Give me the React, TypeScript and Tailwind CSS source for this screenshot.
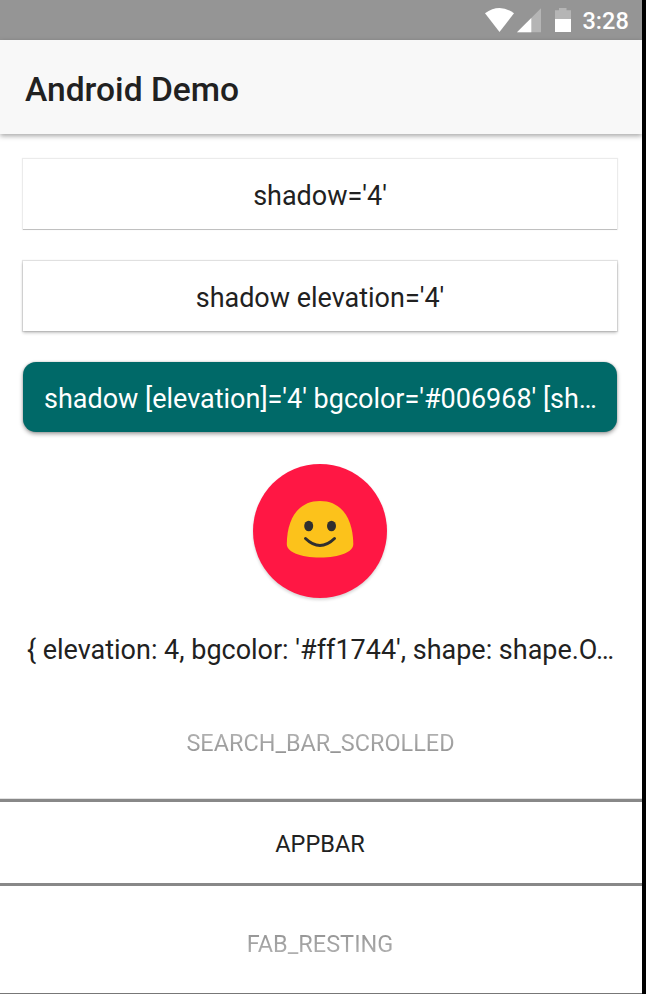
import type { ReactNode } from "react";

function StatusBar() {
  return (
    <div className="flex h-[40px] justify-end bg-[#959595] text-white">
      <svg width="100" height="40" viewBox="0 0 100 40" className="shrink-0" aria-hidden="true">
        <path d="M0 13.3 Q14.5 2.7 29 13.3 L14.5 32 Z" fill="#fff" />
        <path d="M56 8.3 V32.3 H32 Z" fill="#b5b5b5" />
        <path d="M46.3 18 V32.3 H32 Z" fill="#fff" />
        <path d="M70 10.2 H74 V8 H81.5 V10.2 H86 V19 H70 Z" fill="#b5b5b5" />
        <path d="M70 19 H86 V32 H70 Z" fill="#fff" />
      </svg>
      <span className="-ml-[2.5px] w-[59.5px] text-[23.5px] leading-[43px] font-medium whitespace-nowrap">3:28</span>
    </div>
  );
}

function Card({ className, children }: { className: string; children: ReactNode }) {
  return (
    <div className={`ml-[23px] h-[70px] w-[594px] text-center text-[26.98px] leading-[75px] whitespace-nowrap ${className}`}>
      {children}
    </div>
  );
}

function Face() {
  return (
    <svg width="134" height="134" viewBox="0 0 134 134" aria-hidden="true">
      <path
        d="M67 37 C89 37 100 55 100.3 80 C100.3 88 87 93.5 67 93.5 C47 93.5 33.8 88 33.8 80 C34 55 45 37 67 37 Z"
        fill="#fcc21b"
      />
      <ellipse cx="55.7" cy="62" rx="4.5" ry="5.2" fill="#2f2f2f" />
      <ellipse cx="78.5" cy="62" rx="4.5" ry="5.2" fill="#2f2f2f" />
      <path d="M52.5 74.5 Q67 88.5 81.5 74.5" fill="none" stroke="#2f2f2f" strokeWidth="3" strokeLinecap="round" />
    </svg>
  );
}

export default function App() {
  return (
    <div className="flex h-[994px] w-[646px] overflow-hidden bg-black font-['Roboto',sans-serif] text-[#212121]">
      <div className="flex w-[642px] flex-col overflow-hidden bg-white">
        <StatusBar />
        <header className="h-[94px] shrink-0 bg-[#f8f8f8] pl-[25px] text-[33.6px] leading-[99px] font-medium shadow-[0_2px_5px_rgba(0,0,0,0.35)]">
          Android Demo
        </header>
        <main className="flex flex-col pt-[25px]">
          <Card className="bg-white shadow-[0_0_1px_1px_rgba(0,0,0,0.08),0_1px_0_rgba(0,0,0,0.18)]">shadow='4'</Card>
          <Card className="mt-[32px] bg-white shadow-[0_0_1px_1px_rgba(0,0,0,0.11),0_2px_3px_rgba(0,0,0,0.22)]">shadow elevation='4'</Card>
          <Card className="mt-[31px] rounded-[13px] bg-[#006968] pl-px text-white shadow-[0_0_2px_rgba(0,0,0,0.2),0_2px_4px_rgba(0,0,0,0.38)]">
            shadow [elevation]='4' bgcolor='#006968' [sh…
          </Card>
          <div className="mt-[32px] ml-[253px] size-[134px] rounded-full bg-[#ff1744] shadow-[0_2px_3px_rgba(0,0,0,0.16)]">
            <Face />
          </div>
          <p className="mt-[34px] w-[641px] text-center text-[26.98px] leading-[36px] whitespace-nowrap">
            {"{ elevation: 4, bgcolor: '#ff1744', shape: shape.O…"}
          </p>
        </main>
        <section className="mt-[60px] flex flex-col text-center text-[23.5px]">
          <div className="h-[71px] w-[641px] text-[23.45px] leading-[30px]">
            <span className="inline-block bg-linear-to-b from-[#b8b8b8] to-[#8e8e8e] bg-clip-text text-transparent">SEARCH_BAR_SCROLLED</span>
          </div>
          <div className="h-[87px] border-y-[3px] border-[#888888] pr-[2px] leading-[84px] shadow-[0_-1px_0_#e2e2e2]">APPBAR</div>
          <div className="h-[107px] w-[640px] pt-[42px] leading-[32px]">
            <span className="inline-block bg-linear-to-b from-[#8e8e8e] to-[#b8b8b8] bg-clip-text text-transparent">FAB_RESTING</span>
          </div>
          <div className="h-px bg-[#777777]" />
        </section>
      </div>
    </div>
  );
}
